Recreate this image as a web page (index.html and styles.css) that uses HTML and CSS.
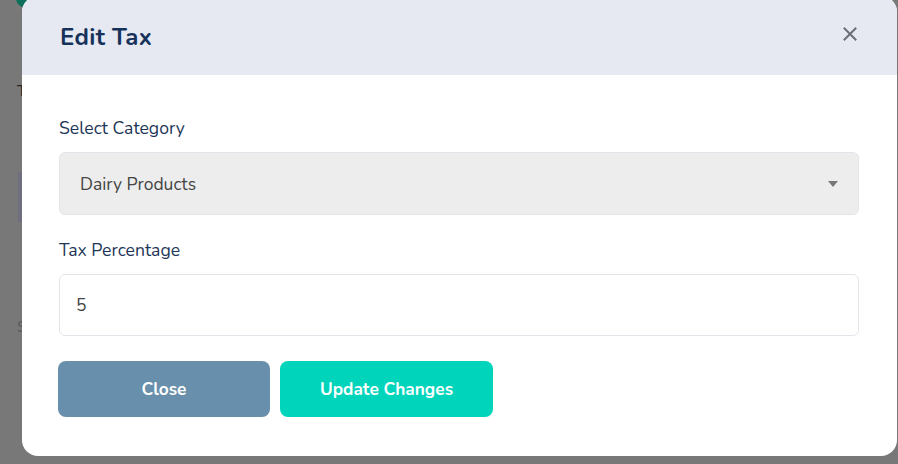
FILE: index.html
```html
<!DOCTYPE html>
<html lang="en">
<head>
<meta charset="utf-8">
<title>Edit Tax</title>
<link rel="stylesheet" href="styles.css">
</head>
<body>
<div class="backdrop">
  <div class="bg-page">
    <div class="bg-pill"></div>
    <div class="bg-t">T</div>
    <div class="bg-block"></div>
    <div class="bg-s">S</div>
  </div>
  <div class="modal">
    <div class="modal-header">
      <h2 class="modal-title">Edit Tax</h2>
      <button class="close-x" aria-label="Close">
        <svg width="14" height="14" viewBox="0 0 14 14"><path d="M1.5 1.5 L12.5 12.5 M12.5 1.5 L1.5 12.5" stroke="#6b6f75" stroke-width="2" stroke-linecap="square"/></svg>
      </button>
    </div>
    <div class="modal-body">
      <div class="field">
        <label class="label">Select Category</label>
        <div class="select">
          <span>Dairy Products</span>
          <span class="caret"></span>
        </div>
      </div>
      <div class="field">
        <label class="label">Tax Percentage</label>
        <div class="input">5</div>
      </div>
      <div class="actions">
        <button class="btn btn-close">Close</button>
        <button class="btn btn-update">Update Changes</button>
      </div>
    </div>
  </div>
</div>
</body>
</html>
```

FILE: styles.css
```css
* { box-sizing: border-box; }
html, body { margin: 0; padding: 0; }
body {
  width: 898px;
  height: 464px;
  overflow: hidden;
  background: #787878;
  font-family: "Nunito", "Lato", "Noto Sans", sans-serif;
}
.backdrop {
  position: relative;
  width: 898px;
  height: 464px;
}
.bg-page { position: absolute; inset: 0; }
.bg-pill {
  position: absolute; left: 16px; top: -12px; width: 30px; height: 20px;
  background: #0e6f5c; border-radius: 10px;
}
.bg-t { position: absolute; left: 17px; top: 80px; color: #222; font-size: 16px; }
.bg-block { position: absolute; left: 18px; top: 172px; width: 10px; height: 50px; background: #6f6f80; }
.bg-s { position: absolute; left: 17px; top: 316px; color: #5a5a5a; font-size: 16px; }

.modal {
  position: absolute;
  left: 22px;
  top: -4px;
  width: 875px;
  height: 460px;
  background: #fff;
  border-radius: 16px;
  overflow: hidden;
}
.modal-header {
  height: 79px;
  background: #e6e9f2;
  display: flex;
  align-items: center;
  justify-content: space-between;
  padding: 4px 40px 0 38px;
}
.modal-title {
  margin: 0;
  font-size: 24px;
  font-weight: 700;
  color: #16325a;
  letter-spacing: 0.3px;
  margin-bottom: 1px;
}
.close-x {
  border: 0; background: none; padding: 0; width: 14px; height: 14px;
  display: flex;
  margin-bottom: 8px;
}
.modal-body {
  padding: 43px 38px 0 37px;
}
.field { display: flex; flex-direction: column; }
.label {
  font-size: 17.6px;
  color: #1d3658;
  line-height: 20px;
  margin-bottom: 14px;
}
.select {
  height: 63px;
  background: #ededed;
  border: 1px solid #e2e4ea;
  border-radius: 6px;
  display: flex;
  align-items: center;
  justify-content: space-between;
  padding: 0 20px 0 20px;
  font-size: 17.5px;
  color: #444;
  margin-bottom: 25px;
}
.caret {
  width: 0; height: 0;
  border-left: 5px solid transparent;
  border-right: 5px solid transparent;
  border-top: 6px solid #777;
}
.input {
  height: 62px;
  background: #fff;
  border: 1px solid #e2e4ea;
  border-radius: 6px;
  display: flex;
  align-items: center;
  padding: 0 16px;
  font-size: 17.5px;
  color: #444;
}
.actions {
  display: flex;
  gap: 10px;
  margin-top: 25px;
  margin-left: -1px;
}
.btn {
  height: 56px;
  border: 0;
  border-radius: 8px;
  color: #fff;
  font-family: inherit;
  font-size: 17.3px;
  font-weight: 700;
}
.btn-close { width: 212px; background: #688fab; }
.btn-update { width: 213px; background: #00d4bb; }
```
